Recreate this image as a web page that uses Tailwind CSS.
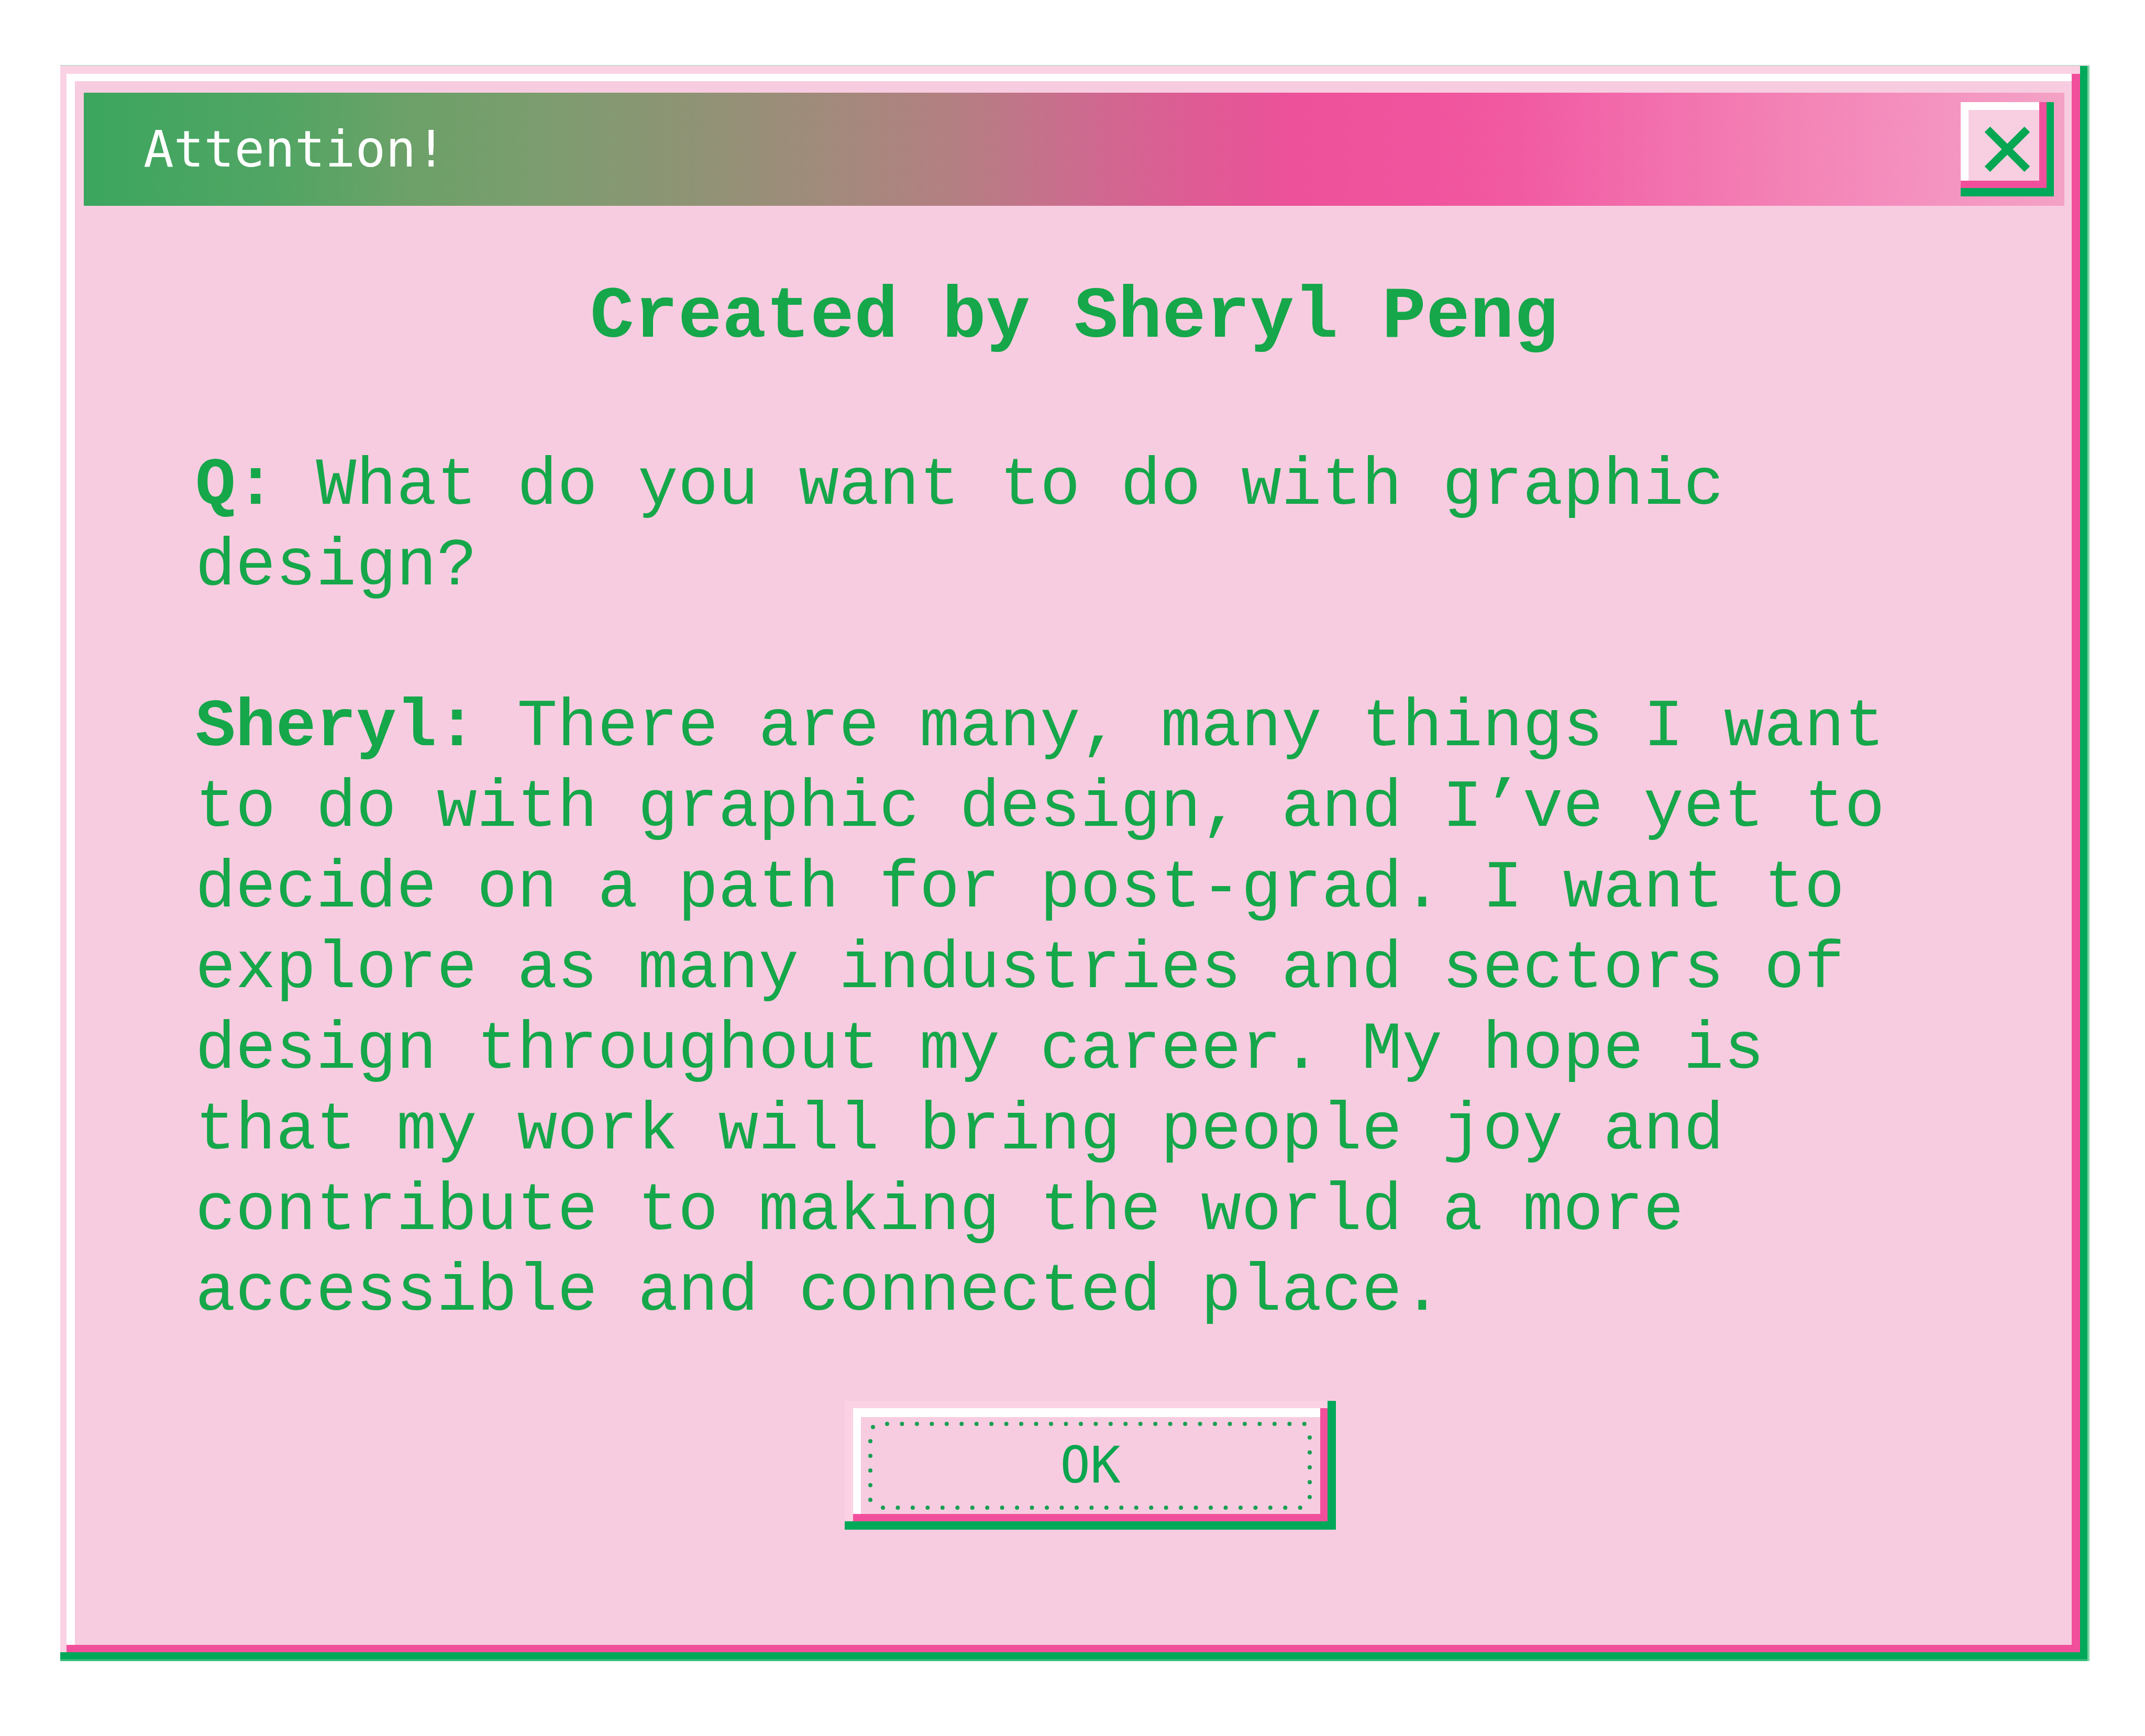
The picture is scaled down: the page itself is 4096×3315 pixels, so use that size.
<!DOCTYPE html>
<html lang="en">
<head>
<meta charset="utf-8">
<title>Attention!</title>
<meta name="viewport" content="width=device-width, initial-scale=1">
<script src="https://cdn.jsdelivr.net/npm/@tailwindcss/browser@4"></script>
</head>
<body class="bg-white">
<main class="pt-[124px] pr-[106px] pb-[143px] pl-[115px]">
  <!-- Dialog window: the bevel is a stack of inset shadows, topmost first -->
  <section role="dialog" aria-labelledby="window-title" class="flex flex-col bg-[#f8cce0] pt-[53px] pr-[48px] pb-[251px] pl-[45px] shadow-[inset_0_2px_0_0_#c5d9cc,inset_-4px_0_0_0_#7fd3a3,inset_0_-4px_0_0_#35bb78,inset_-18px_-17px_0_0_#00a859,inset_12px_17px_0_0_#fad2e4,inset_-34px_-31px_0_0_#f14f9c,inset_28px_31px_0_0_#ffffff]">
    <header class="flex h-[216px] items-center justify-between bg-[linear-gradient(to_right,#3ba65e_0%,#52a564_10%,#6ba168_16%,#7c9d6f_23%,#8d9474_30%,#a08b7b_37%,#b47f82_44%,#cf6990_51%,#de5b94_56%,#ec5199_61%,#f0549e_68%,#f159a0_72%,#f26ead_79%,#f382b5_86%,#f48fbe_92%,#f4a2c6_100%)] pr-[20px] pl-[114px]">
      <h1 id="window-title" class="font-['DejaVu_Sans_Mono',monospace] text-[96px] leading-[112px] text-white">Attention!</h1>
      <button type="button" aria-label="Close" class="flex h-[180px] w-[178px] items-center justify-center bg-[#f8cfe1] shadow-[inset_-14px_-16px_0_0_#00a859,inset_-28px_-30px_0_0_#f14f9c,inset_15px_15px_0_0_#ffffff]">
        <svg class="size-[88px]" viewBox="0 0 88 88" fill="none" stroke="#05a753" stroke-width="15" aria-hidden="true"><path d="M6 6L82 82M82 6L6 82"/></svg>
      </button>
    </header>
    <div class="flex flex-col pt-[129px] pr-[269px] pl-[213px] font-['Liberation_Mono',monospace] text-[128px] leading-[154px] text-[#15a74a]">
      <h2 class="-mr-[56px] text-center text-[140px] leading-[168px] font-bold">Created by Sheryl Peng</h2>
      <p class="mt-[161px]"><strong>Q:</strong> What do you want to do with graphic design?</p>
      <p class="mt-[153px]"><strong>Sheryl:</strong> There are many, many things I want to do with graphic design, and I’ve yet to decide on a path for post-grad. I want to explore as many industries and sectors of design throughout my career. My hope is that my work will bring people joy and contribute to making the world a more accessible and connected place.</p>
    </div>
    <div class="mt-[131px] flex justify-center pl-[62px]">
      <button type="button" class="relative flex h-[246px] w-[938px] items-center justify-center font-['DejaVu_Sans_Mono',monospace] text-[96px] leading-[112px] text-[#0ba54e] shadow-[inset_-16px_-16px_0_0_#00a859,inset_16px_14px_0_0_#fad2e4,inset_-30px_-30px_0_0_#f14f9c,inset_31px_31px_0_0_#ffffff]">
        <!-- Dotted focus ring -->
        <svg class="absolute inset-0 size-full" viewBox="0 0 938 246" fill="none" stroke="#16a052" stroke-width="8" stroke-linecap="round" stroke-dasharray="0 2" aria-hidden="true">
          <path pathLength="57" d="M81 44H892"/>
          <path pathLength="57" d="M73 204H884"/>
          <path pathLength="9" d="M49 77V203"/>
          <path pathLength="9" d="M888 70V198"/>
          <circle cx="54" cy="50" r="4" fill="#16a052" stroke="none"/>
        </svg>
        OK
      </button>
    </div>
  </section>
</main>
</body>
</html>
